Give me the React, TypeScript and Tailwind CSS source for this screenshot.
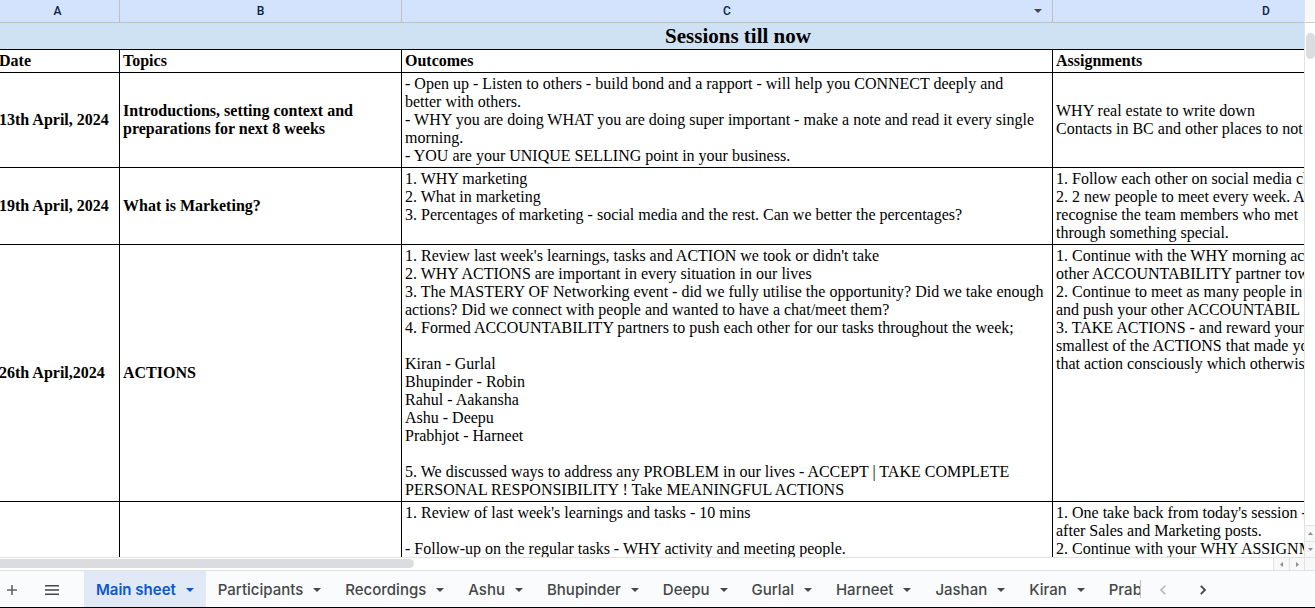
import { Fragment } from "react";

type Row = {
  date: string;
  topic: string[];
  outcomes: string[];
  assignments: string[];
  centered?: boolean;
};

const rows: Row[] = [
  {
    date: "13th April, 2024",
    topic: ["Introductions, setting context and", "preparations for next 8 weeks"],
    outcomes: [
      "- Open up - Listen to others - build bond and a rapport - will help you CONNECT deeply and",
      "better with others.",
      "- WHY you are doing WHAT you are doing super important - make a note and read it every single",
      "morning.",
      "- YOU are your UNIQUE SELLING point in your business.",
    ],
    assignments: ["WHY real estate to write down", "Contacts in BC and other places to not"],
    centered: true,
  },
  {
    date: "19th April, 2024",
    topic: ["What is Marketing?"],
    outcomes: [
      "1. WHY marketing",
      "2. What in marketing",
      "3. Percentages of marketing - social media and the rest. Can we better the percentages?",
    ],
    assignments: [
      "1. Follow each other on social media ch",
      "2. 2 new people to meet every week. A",
      "recognise the team members who met",
      "through something special.",
    ],
  },
  {
    date: "26th April,2024",
    topic: ["ACTIONS"],
    outcomes: [
      "1. Review last week's learnings, tasks and ACTION we took or didn't take",
      "2. WHY ACTIONS are important in every situation in our lives",
      "3. The MASTERY OF Networking event - did we fully utilise the opportunity? Did we take enough",
      "actions? Did we connect with people and wanted to have a chat/meet them?",
      "4. Formed ACCOUNTABILITY partners to push each other for our tasks throughout the week;",
      "",
      "Kiran - Gurlal",
      "Bhupinder - Robin",
      "Rahul - Aakansha",
      "Ashu - Deepu",
      "Prabhjot - Harneet",
      "",
      "5. We discussed ways to address any PROBLEM in our lives - ACCEPT | TAKE COMPLETE",
      "PERSONAL RESPONSIBILITY ! Take MEANINGFUL ACTIONS",
    ],
    assignments: [
      "1. Continue with the WHY morning ac",
      "other ACCOUNTABILITY partner tow",
      "2. Continue to meet as many people in",
      "and push your other ACCOUNTABIL",
      "3. TAKE ACTIONS - and reward your",
      "smallest of the ACTIONS that made yo",
      "that action consciously which otherwis",
    ],
  },
  {
    date: "",
    topic: [],
    outcomes: [
      "1. Review of last week's learnings and tasks - 10 mins",
      "",
      "- Follow-up on the regular tasks - WHY activity and meeting people.",
    ],
    assignments: [
      "1. One take back from today's session -",
      "after Sales and Marketing posts.",
      "2. Continue with your WHY ASSIGNM",
    ],
  },
];

const tabs = [
  "Main sheet",
  "Participants",
  "Recordings",
  "Ashu",
  "Bhupinder",
  "Deepu",
  "Gurlal",
  "Harneet",
  "Jashan",
  "Kiran",
  "Prabhjot",
];

function Lines({ lines }: { lines: string[] }) {
  return (
    <>
      {lines.map((line, i) => (
        <Fragment key={i}>
          {i > 0 && <br />}
          {line}
        </Fragment>
      ))}
    </>
  );
}

function Caret() {
  return (
    <svg width="8" height="4" viewBox="0 0 8 4" fill="currentColor" aria-hidden="true">
      <path d="M0 0h8L4 4z" />
    </svg>
  );
}

function Arrow({ d }: { d: string }) {
  return (
    <svg width="5" height="5" viewBox="0 0 5 5" fill="#8a8d91" aria-hidden="true">
      <path d={d} />
    </svg>
  );
}

const cell = "border-r border-b border-black px-[3px] py-[2px] text-left";
const letter = "h-[23px] border-r border-b border-[#c0c0c0] bg-[#d3e3fd] p-0 font-medium";

function Sheet() {
  return (
    <div className="min-w-0 flex-1 overflow-hidden">
      <table className="-ml-1 w-[1484px] table-fixed border-separate border-spacing-0 whitespace-nowrap font-['Liberation_Serif',serif] text-[16px] leading-[18px] text-black">
        <colgroup>
          <col className="w-[124px]" />
          <col className="w-[282px]" />
          <col className="w-[651px]" />
          <col />
        </colgroup>
        <thead>
          <tr className="font-[Roboto,sans-serif] text-[12px] leading-[20px] text-[#041e49]">
            <th className={letter}>A</th>
            <th className={letter}>B</th>
            <th className={letter}>
              <div className="flex items-center pr-[10px] pl-[18px]">
                <span className="flex-1">C</span>
                <button type="button" aria-label="Column C menu" className="text-[#444746]">
                  <Caret />
                </button>
              </div>
            </th>
            <th className={letter}>D</th>
          </tr>
        </thead>
        <tbody>
          <tr>
            <th
              colSpan={4}
              className="h-[27px] border-b border-black bg-[#cfe2f3] p-0 text-center text-[21px] leading-[26px] font-bold"
            >
              Sessions till now
            </th>
          </tr>
          <tr className="font-bold">
            <th className={cell}>Date</th>
            <th className={cell}>Topics</th>
            <th className={cell}>Outcomes</th>
            <th className={cell}>Assignments</th>
          </tr>
          {rows.map((row, i) => (
            <tr key={i}>
              <td className={`${cell} align-middle font-bold`}>{row.date}</td>
              <td className={`${cell} align-middle font-bold`}>
                <Lines lines={row.topic} />
              </td>
              <td className={`${cell} align-top`}>
                <Lines lines={row.outcomes} />
              </td>
              <td className={`${cell} ${row.centered ? "align-middle" : "align-top"}`}>
                <Lines lines={row.assignments} />
              </td>
            </tr>
          ))}
        </tbody>
      </table>
    </div>
  );
}

function VerticalScroll() {
  return (
    <div className="flex w-[11px] shrink-0 flex-col border-l border-[#e1e3e1] bg-white">
      <div className="h-[23px] border-b border-[#d0d0d0] bg-[#f8f8f8]" />
      <div className="flex-1 pt-[10px] pl-px">
        <div className="h-[26px] rounded-full bg-[#dadce0]" />
      </div>
      <button
        type="button"
        aria-label="Scroll up"
        className="flex h-4 items-center justify-center border-t border-[#e1e3e1] bg-[#f8f8f8]"
      >
        <Arrow d="M0 4h5L2.5 1z" />
      </button>
      <button
        type="button"
        aria-label="Scroll down"
        className="flex h-4 items-center justify-center border-t border-[#e1e3e1] bg-[#f8f8f8]"
      >
        <Arrow d="M0 1h5L2.5 4z" />
      </button>
    </div>
  );
}

function HorizontalScroll() {
  return (
    <div className="flex h-[14px] shrink-0 border-y border-[#e1e3e1] bg-white">
      <div className="flex-1 overflow-hidden pt-px">
        <div className="h-[9px] w-[414px] rounded-r-full bg-[#dadce0]" />
      </div>
      <button
        type="button"
        aria-label="Scroll left"
        className="flex w-4 items-center justify-center border-l border-[#e1e3e1] bg-[#f8f8f8]"
      >
        <Arrow d="M4 0v5L1 2.5z" />
      </button>
      <button
        type="button"
        aria-label="Scroll right"
        className="flex w-[15px] items-center justify-center border-l border-[#e1e3e1] bg-[#f8f8f8]"
      >
        <Arrow d="M1 0v5l3-2.5z" />
      </button>
      <div className="w-[11px] border-l border-[#e1e3e1] bg-[#f8f8f8]" />
    </div>
  );
}

function TabBar() {
  return (
    <div className="flex h-[37px] shrink-0 items-stretch border-b border-black bg-[#f9fbfd] text-[#444746]">
      <button type="button" aria-label="Add sheet" className="flex w-6 items-center justify-center pt-[2px]">
        <svg width="10" height="10" viewBox="0 0 10 10" stroke="#5f6368" strokeWidth="1.6" aria-hidden="true">
          <path d="M5 0v10M0 5h10" />
        </svg>
      </button>
      <button type="button" aria-label="All sheets" className="flex w-[60px] items-center pt-[2px] pl-[21px]">
        <svg width="14" height="10" viewBox="0 0 14 10" fill="#444746" aria-hidden="true">
          <path d="M0 0h14v1.4H0zM0 4.2h14v1.6H0zM0 8.6h14v1.4H0z" />
        </svg>
      </button>
      <nav
        aria-label="Sheets"
        className="flex w-[1056px] min-w-0 shrink overflow-hidden font-[Inter,sans-serif] text-[15px] leading-5 font-medium"
      >
        {tabs.map((tab, i) => (
          <button
            key={tab}
            type="button"
            className={`flex shrink-0 items-center gap-[10px] px-3 pt-[2px] whitespace-nowrap ${
              i === 0 ? "bg-[#e1e9f7] font-semibold text-[#0b57d0]" : ""
            }`}
          >
            {tab}
            <Caret />
          </button>
        ))}
      </nav>
      <div className="my-[9px] border-l border-[#c0c0c0]" />
      <button type="button" aria-label="Previous sheets" className="flex w-11 items-center justify-center pt-[2px] text-[#b4b7ba]">
        <svg width="6" height="10" viewBox="0 0 6 10" fill="none" stroke="currentColor" strokeWidth="1.6" aria-hidden="true">
          <path d="M5.2 0.8L1 5l4.2 4.2" />
        </svg>
      </button>
      <button type="button" aria-label="Next sheets" className="flex w-9 items-center justify-center pt-[2px]">
        <svg width="6" height="10" viewBox="0 0 6 10" fill="none" stroke="currentColor" strokeWidth="1.8" aria-hidden="true">
          <path d="M0.8 0.8L5 5 0.8 9.2" />
        </svg>
      </button>
    </div>
  );
}

export default function App() {
  return (
    <main className="flex h-screen flex-col overflow-hidden bg-white">
      <div className="flex min-h-0 flex-1">
        <Sheet />
        <VerticalScroll />
      </div>
      <HorizontalScroll />
      <TabBar />
    </main>
  );
}
